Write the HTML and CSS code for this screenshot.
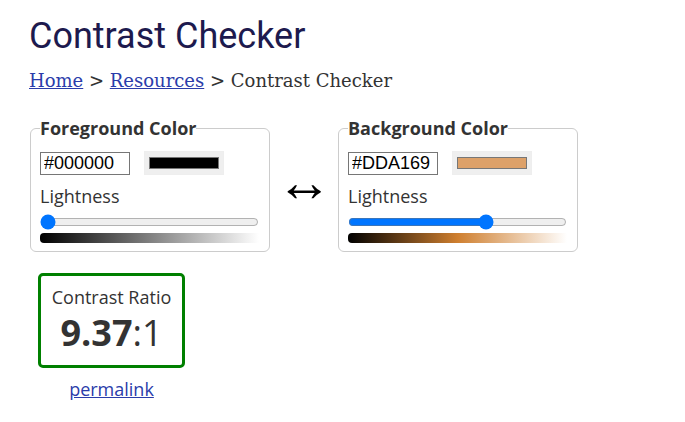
FILE: index.html
```html
<!DOCTYPE html>
<html>
<head>
<meta charset="utf-8">
<link rel="stylesheet" href="styles.css">
</head>
<body>
<main class="page">
  <h1 class="title">Contrast Checker</h1>
  <nav class="crumbs"><a href="#">Home</a> &gt; <a href="#">Resources</a> &gt; Contrast Checker</nav>
  <div class="pickers">
    <fieldset class="picker">
      <legend>Foreground Color</legend>
      <div class="row">
        <input class="hex" type="text" value="#000000">
        <input class="swatch" type="color" value="#000000">
      </div>
      <label class="lbl">Lightness</label>
      <input class="range" type="range" min="0" max="100" value="0">
      <div class="grad grad-fg"></div>
    </fieldset>
    <div class="swap">&#8596;</div>
    <fieldset class="picker">
      <legend>Background Color</legend>
      <div class="row">
        <input class="hex" type="text" value="#DDA169">
        <input class="swatch" type="color" value="#dda169">
      </div>
      <label class="lbl">Lightness</label>
      <input class="range" type="range" min="0" max="100" value="64">
      <div class="grad grad-bg"></div>
    </fieldset>
  </div>
  <div class="result">
    <div class="ratio-box">
      <div class="ratio-label">Contrast Ratio</div>
      <div class="ratio"><b>9.37</b>:1</div>
    </div>
    <a class="permalink" href="#">permalink</a>
  </div>
</main>
</body>
</html>
```
FILE: styles.css
```css
html, body { margin: 0; padding: 0; background: #fff; }
body { font-family: "Open Sans", sans-serif; color: #333; }
.page { padding: 14px 29px; }
.title {
  font-family: Roboto, sans-serif;
  font-weight: 400;
  font-size: 36px;
  line-height: 44px;
  color: #1d1a4e;
  margin: 0;
}
.crumbs {
  font-family: "DejaVu Serif", serif;
  font-size: 18px;
  margin-top: 12px;
  color: #333;
}
.crumbs a { color: #2a3caa; }
.pickers { display: flex; align-items: center; margin: 26px 0 0 1px; }
.picker {
  margin: 0;
  width: 240px;
  box-sizing: border-box;
  border: 1px solid #ccc;
  border-radius: 6px;
  padding: 12px 10px 8px 9px;
}
.picker legend { font-weight: 700; font-size: 18px; line-height: 22px; padding: 0; color: #333; }
.row { display: flex; align-items: center; gap: 14px; }
.hex {
  font-family: "Liberation Sans", sans-serif;
  font-size: 18px;
  width: 90px; height: 23px;
  box-sizing: border-box;
  border: 1px solid #767676;
  padding: 0 3px;
  margin: 0;
  color: #000;
}
.swatch { width: 80px; height: 24px; margin: 0; padding: 1px 2px; border: 1px solid #eee; background: #efefef; box-sizing: border-box; }
.lbl { display: block; font-size: 18px; margin-top: 9px; line-height: 24px; }
.range { display: block; width: 219px; margin: 6px 0 0 0; accent-color: #0075ff; height: 16px; }
.grad { height: 10px; width: 219px; margin-top: 3px; border-radius: 4px 0 0 4px; }
.grad-fg { background: linear-gradient(to right, #000, #fff); }
.grad-bg { background: linear-gradient(to right, #000, #cf7f2f 50%, #fff); }
.swap { font-size: 56px; line-height: 40px; width: 68px; text-align: center; color: #000; font-family: "Liberation Sans", sans-serif; margin-top: -6px; }
.result { display: inline-flex; flex-direction: column; align-items: center; margin: 21px 0 0 9px; }
.ratio-box {
  width: 147px; height: 95px; box-sizing: border-box;
  border: 3px solid #008000; border-radius: 5px;
  text-align: center; padding-top: 9px;
}
.ratio-label { font-size: 18px; line-height: 24px; }
.ratio { font-size: 36px; line-height: 48px; }
.ratio b { font-weight: 700; }
.permalink { margin-top: 9px; font-size: 18px; color: #2a3caa; }
```
